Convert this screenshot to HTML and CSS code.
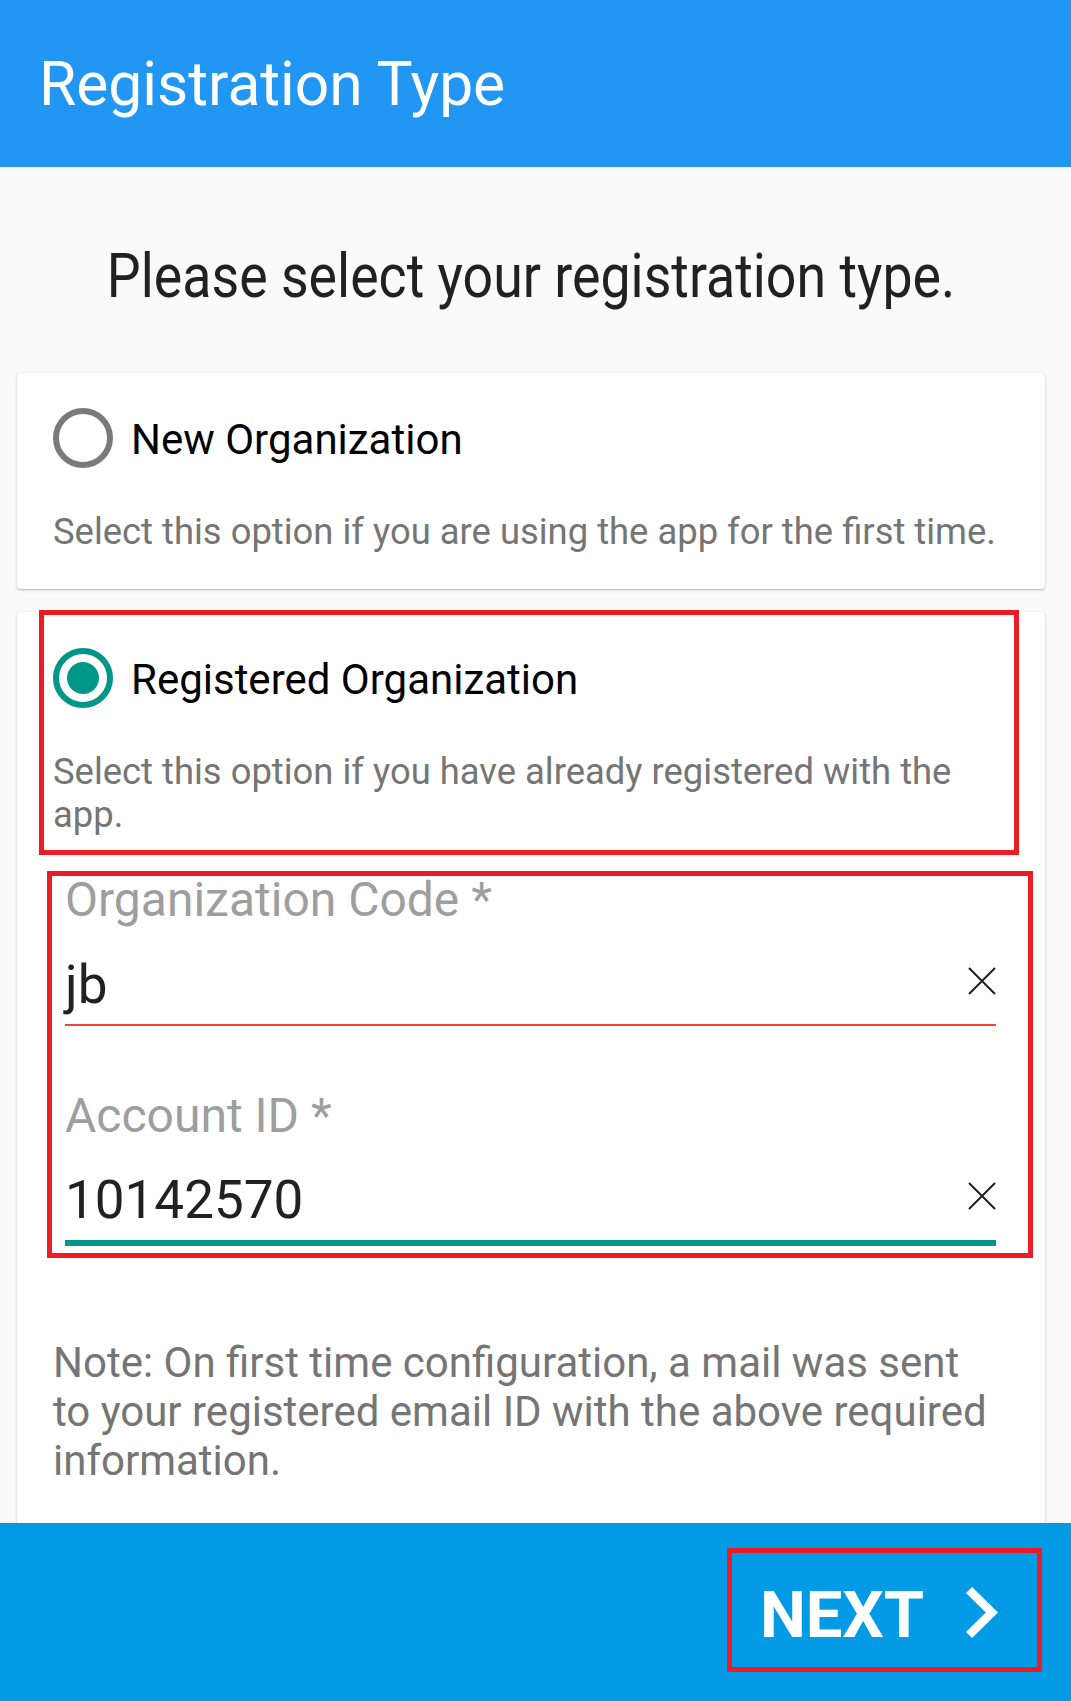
FILE: index.html
```html
<!DOCTYPE html>
<html lang="en">
<head>
<meta charset="utf-8">
<title>Registration Type</title>
<link rel="stylesheet" href="styles.css">
</head>
<body>
<div class="screen">
  <header class="appbar">
    <h1 class="appbar-title">Registration Type</h1>
  </header>
  <main class="content">
    <div class="prompt"><span class="prompt-text">Please select your registration type.</span></div>

    <section class="card card-new">
      <div class="option-row">
        <span class="radio"></span>
        <span class="option-label">New Organization</span>
      </div>
      <p class="option-desc">Select this option if you are using the app for the first time.</p>
    </section>

    <section class="card card-registered">
      <div class="option-row">
        <span class="radio radio-checked"><span class="radio-dot"></span></span>
        <span class="option-label">Registered Organization</span>
      </div>
      <p class="option-desc">Select this option if you have already registered with the app.</p>

      <div class="field field-first">
        <div class="field-label">Organization Code *</div>
        <div class="field-input">
          <span class="field-value">jb</span>
          <svg class="clear-icon" width="28" height="28" viewBox="0 0 28 28"><path d="M1 1L27 27M27 1L1 27" stroke="#1f1f1f" stroke-width="2" fill="none"/></svg>
        </div>
        <div class="field-line line-error"></div>
      </div>

      <div class="field field-second">
        <div class="field-label">Account ID *</div>
        <div class="field-input">
          <span class="field-value">10142570</span>
          <svg class="clear-icon" width="28" height="28" viewBox="0 0 28 28"><path d="M1 1L27 27M27 1L1 27" stroke="#1f1f1f" stroke-width="2" fill="none"/></svg>
        </div>
        <div class="field-line line-focused"></div>
      </div>

      <p class="note">Note: On first time configuration, a mail was sent to your registered email ID with the above required information.</p>

      <div class="annot annot-option"></div>
      <div class="annot annot-fields"></div>
    </section>
  </main>
  <footer class="bottombar">
    <button class="next-btn" type="button">
      <span class="next-text">NEXT</span>
      <svg class="next-chevron" width="32" height="51" viewBox="8.59 6 7.41 12" preserveAspectRatio="none"><path d="M10 6L8.59 7.41 13.17 12l-4.58 4.59L10 18l6-6z" fill="#ffffff"/></svg>
    </button>
  </footer>
</div>
</body>
</html>
```

FILE: styles.css
```css
* { box-sizing: border-box; }

html, body {
  margin: 0;
  padding: 0;
}

body {
  background: #fafafa;
  font-family: Roboto, "Noto Sans", "Liberation Sans", sans-serif;
}

.screen {
  width: 1071px;
  height: 1701px;
  display: flex;
  flex-direction: column;
  overflow: hidden;
}

.appbar {
  flex-shrink: 0;
  height: 167px;
  background: #2196f3;
  padding: 50px 0 0 39px;
}

.appbar-title {
  margin: 0;
  font-size: 60.5px;
  font-weight: 400;
  line-height: 70px;
  color: #ffffff;
}

.content {
  flex: 1;
  overflow: hidden;
  background: #fafafa;
}

.prompt {
  height: 206px;
  padding-top: 74px;
  padding-right: 10px;
  text-align: center;
}

.prompt-text {
  display: inline-block;
  font-size: 61px;
  line-height: 70px;
  color: #212121;
  transform: scaleX(0.88);
  transform-origin: 50% 50%;
  white-space: nowrap;
}

.card {
  position: relative;
  margin-left: 17px;
  width: 1028px;
  background: #ffffff;
  border-radius: 4px;
  box-shadow: 0 1px 3px rgba(0, 0, 0, 0.22), 0 1px 1px rgba(0, 0, 0, 0.08);
  padding: 35px 36px 36px 36px;
}

.card-registered {
  margin-top: 23px;
  padding-top: 36px;
  padding-bottom: 200px;
}

.option-row {
  display: flex;
  align-items: flex-start;
  gap: 18px;
}

.radio {
  flex-shrink: 0;
  width: 60px;
  height: 60px;
  border-radius: 50%;
  border: 6px solid #7a7a7a;
  display: flex;
  align-items: center;
  justify-content: center;
}

.radio-checked {
  border-color: #009688;
}

.radio-dot {
  width: 32px;
  height: 32px;
  border-radius: 50%;
  background: #009688;
}

.option-label {
  padding-top: 1px;
  font-size: 42px;
  line-height: 61px;
  color: #000000;
}

.option-desc {
  margin: 40px 0 0 0;
  font-size: 36.4px;
  line-height: 43px;
  color: #757575;
}

.field {
  margin-left: 12px;
  width: 931px;
}

.field-first {
  margin-top: 37px;
}

.field-second {
  margin-top: 63px;
}

.field-label {
  font-size: 48px;
  line-height: 54px;
  color: #9e9e9e;
}

.field-input {
  display: flex;
  align-items: flex-start;
  justify-content: space-between;
  margin-top: 27px;
}

.field-second .field-input {
  margin-top: 26px;
}

.field-value {
  font-size: 53px;
  line-height: 62px;
  color: #212121;
}

.clear-icon {
  margin-top: 13px;
  flex-shrink: 0;
}

.field-line {
  margin-top: 8px;
}

.line-error {
  height: 2px;
  background: #f44336;
}

.line-focused {
  margin-top: 9px;
  height: 6px;
  background: #009688;
}

.note {
  margin: 92px 0 0 0;
  padding-right: 14px;
  font-size: 42px;
  line-height: 49px;
  color: #757575;
}

.annot {
  position: absolute;
  border: 5px solid #ed1c24;
  pointer-events: none;
}

.annot-option {
  left: 22px;
  top: -2px;
  width: 980px;
  height: 245px;
}

.annot-fields {
  left: 30px;
  top: 259px;
  width: 986px;
  height: 387px;
}

.bottombar {
  flex-shrink: 0;
  height: 178px;
  background: #039be5;
  display: flex;
  justify-content: flex-end;
  align-items: flex-start;
  padding: 25px 29px 0 0;
}

.next-btn {
  width: 315px;
  height: 124px;
  border: 5px solid #ed1c24;
  background: transparent;
  display: flex;
  align-items: flex-start;
  padding: 25px 0 0 28px;
  margin: 0;
  font-family: Roboto, "Noto Sans", "Liberation Sans", sans-serif;
  cursor: pointer;
}

.next-text {
  font-size: 65px;
  font-weight: 700;
  line-height: 74px;
  color: #ffffff;
}

.next-chevron {
  margin-left: 42px;
  margin-top: 9px;
  flex-shrink: 0;
}
```
